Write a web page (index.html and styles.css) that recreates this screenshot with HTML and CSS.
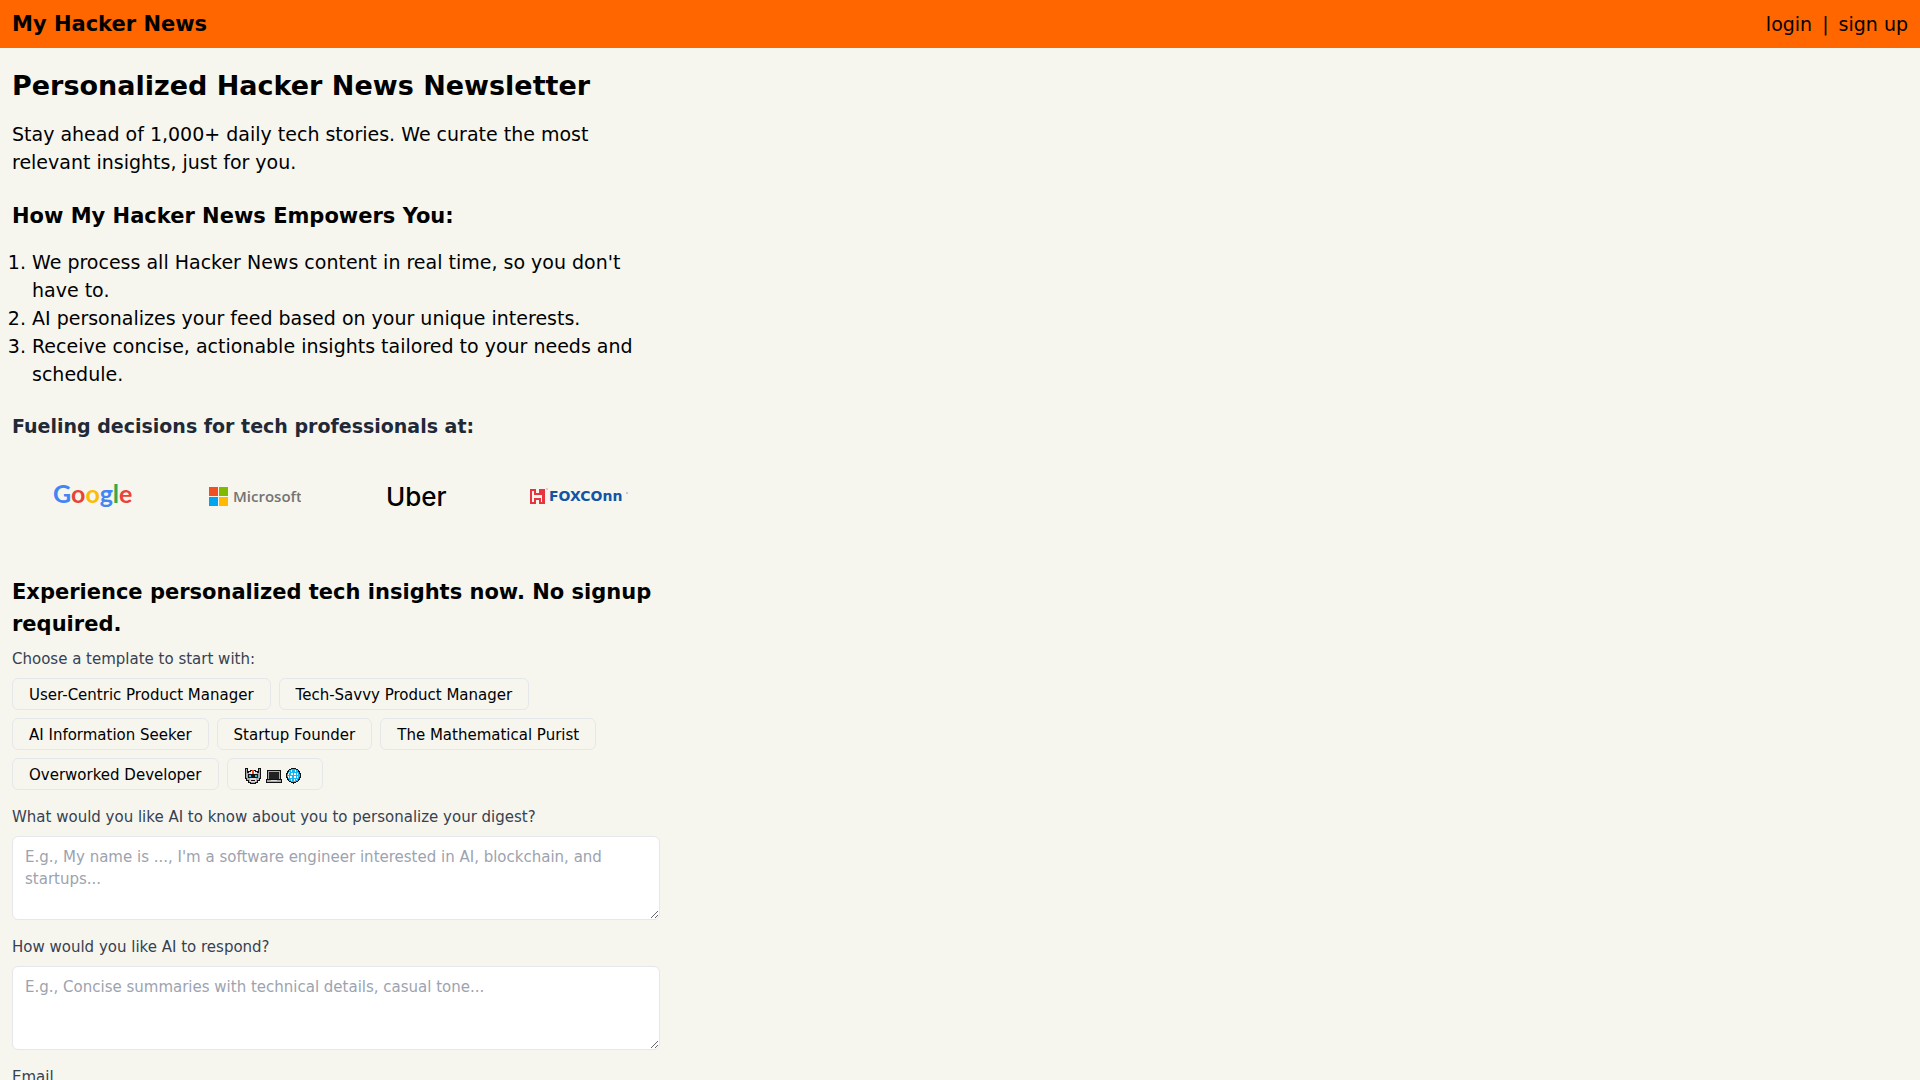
FILE: index.html
```html
<!DOCTYPE html>
<html lang="en">
<head>
  <meta charset="UTF-8" />
  <meta name="viewport" content="width=device-width, initial-scale=1.0"/>
  <title>My Hacker News</title>
  <link rel="stylesheet" href="styles.css">
</head>
<body>

<header class="topbar">
  <a class="brand" href="#">My Hacker News</a>
  <nav class="nav">
    <a href="#">login</a>
    <span>|</span>
    <a href="#">sign up</a>
  </nav>
</header>

<main class="container">
  <h1>Personalized Hacker News Newsletter</h1>
  <p class="lead">Stay ahead of 1,000+ daily tech stories. We curate the most relevant insights, just for you.</p>

  <h2 class="how">How My Hacker News Empowers You:</h2>
  <ol class="steps">
    <li>We process all Hacker News content in real time, so you don't have to.</li>
    <li>AI personalizes your feed based on your unique interests.</li>
    <li>Receive concise, actionable insights tailored to your needs and schedule.</li>
  </ol>

  <h3>Fueling decisions for tech professionals at:</h3>
  <div class="logos">
    <svg width="80" height="40" viewBox="0 0 80 40" role="img" aria-label="Google">
      <text class="google" x="0" y="27"><tspan fill="#4285f4">G</tspan><tspan fill="#ea4335">o</tspan><tspan fill="#fbbc05">o</tspan><tspan fill="#4285f4">g</tspan><tspan fill="#34a853">l</tspan><tspan fill="#ea4335">e</tspan></text>
    </svg>
    <svg width="92" height="32" viewBox="0 0 92 32" role="img" aria-label="Microsoft">
      <rect x="0" y="7" width="9" height="9" fill="#f25022"/>
      <rect x="10" y="7" width="9" height="9" fill="#7fba00"/>
      <rect x="0" y="17" width="9" height="9" fill="#00a4ef"/>
      <rect x="10" y="17" width="9" height="9" fill="#ffb900"/>
      <text class="microsoft" x="24" y="22">Microsoft</text>
    </svg>
    <svg width="62" height="40" viewBox="0 0 62 40" role="img" aria-label="Uber">
      <text class="uber" x="0" y="30">Uber</text>
    </svg>
    <svg width="100" height="32" viewBox="0 0 100 32" role="img" aria-label="Foxconn">
      <path d="M1 9h6v4h3v-4h6v15h-6v-4h-3v4h-6z" fill="#e8343e"/>
      <path d="M3 11h2v4h8v7h-1v-4h-7v4h-2z" fill="#f6f6ef"/>
      <circle cx="18" cy="9" r="1" fill="#f3b5b5"/>
      <text class="foxconn" x="20" y="21">FOXCOnn</text>
      <circle cx="98" cy="13" r="1" fill="#a9bdd8"/>
    </svg>
  </div>

  <h2 class="try">Experience personalized tech insights now. No signup required.</h2>

  <form id="digestForm">
    <p class="hint">Choose a template to start with:</p>
    <div class="templates">
      <button type="button">User-Centric Product Manager</button>
      <button type="button">Tech-Savvy Product Manager</button>
      <button type="button">AI Information Seeker</button>
      <button type="button">Startup Founder</button>
      <button type="button">The Mathematical Purist</button>
      <button type="button">Overworked Developer</button>
      <button type="button" aria-label="Robot, laptop, globe">
        <svg width="62" height="20" viewBox="2 0 62 20" shape-rendering="crispEdges">
          <!-- robot -->
          <path d="M3 3h3v3h2v-1h6v1h2v-3h3v11h-1v2h-2v2h-2v1h-6v-1h-2v-2h-2v-2h-1z" fill="#111"/>
          <path d="M4 4h1v4h2v-1h8v1h2v-4h1v9h-1v2h-2v2h-2v1h-4v-1h-2v-2h-2v-2h-1z" fill="#aaa"/>
          <path d="M7 7h2v2h-2zM13 7h2v2h-2zM8 13h6v4h-6z" fill="#ddd"/>
          <path d="M9 6h4v3h-4z" fill="#fff"/>
          <path d="M10 5h2v4h-2z" fill="#f4442e"/>
          <path d="M6 9h10v4h-10z" fill="#111"/>
          <path d="M7 10h2v2h-2zM13 10h2v2h-2z" fill="#1cc3f5"/>
          <path d="M9 15h4v1h-4z" fill="#111"/>
          <!-- laptop -->
          <path d="M25 5h14v9h1v4h-16v-4h1z" fill="#111"/>
          <path d="M26 6h12v8h-12zM25 15h14v2h-14z" fill="#aaa"/>
          <path d="M27 7h10v7h-10z" fill="#222"/>
          <path d="M29 15h6v1h-6z" fill="#ddd"/>
          <!-- globe -->
          <path d="M49 3h5v1h2v1h1v1h1v2h1v5h-1v2h-1v1h-1v1h-2v1h-2v1h-1v-1h-2v-1h-2v-1h-1v-1h-1v-2h-1v-5h1v-2h1v-1h1v-1h2z" fill="#111"/>
          <path d="M49 4h5v1h2v2h1v2h1v3h-1v2h-1v2h-2v1h-5v-1h-2v-2h-1v-2h-1v-3h1v-2h1v-2h2z" fill="#16b5f0"/>
          <path d="M49 5h1v2h-1zM53 5h1v2h-1zM47 7h1v1h-1zM49 8h2v2h-2zM52 8h2v2h-2zM55 8h1v2h-1zM46 8h1v2h-1zM46 11h1v2h-1zM48 11h2v2h-2zM52 11h2v2h-2zM55 11h1v2h-1zM49 14h1v2h-1zM52 14h1v2h-1zM54 14h1v1h-1z" fill="#fff"/>
        </svg>
      </button>
    </div>

    <label for="about">What would you like AI to know about you to personalize your digest?</label>
    <textarea id="about" placeholder="E.g., My name is ..., I'm a software engineer interested in AI, blockchain, and startups..."></textarea>

    <label for="respond">How would you like AI to respond?</label>
    <textarea id="respond" placeholder="E.g., Concise summaries with technical details, casual tone..."></textarea>

    <label for="email">Email</label>
    <input type="email" id="email" />
  </form>
</main>

</body>
</html>
```
FILE: styles.css
```css
* {
  box-sizing: border-box;
}
body {
  margin: 0;
  background-color: #f6f6ef;
  color: #000;
  font-family: Verdana, "DejaVu Sans", sans-serif;
  font-size: 19px;
  line-height: 28px;
}
a {
  color: inherit;
  text-decoration: none;
}
h1, h2, h3, p, ol {
  margin: 0;
}
.topbar {
  display: flex;
  justify-content: space-between;
  align-items: center;
  height: 48px;
  padding: 0 12px;
  background: #ff6600;
}
.brand {
  font-size: 21px;
  font-weight: bold;
}
.nav {
  display: flex;
  gap: 10px;
}
.container {
  max-width: 672px;
  padding: 20px 12px;
}
h1 {
  margin-bottom: 16px;
  font-size: 27px;
  line-height: 36px;
}
h2 {
  font-size: 21px;
  line-height: 32px;
}
h3 {
  color: #1f2937;
  font-size: 19px;
}
.lead {
  margin-bottom: 24px;
}
.how {
  margin-bottom: 16px;
}
.steps {
  margin-bottom: 24px;
  padding-left: 20px;
}
.logos {
  display: grid;
  grid-template-columns: repeat(4, 1fr);
  align-items: center;
  justify-items: center;
  height: 112px;
  margin-bottom: 24px;
}
.google {
  font: bold 25px Lato, sans-serif;
}
.microsoft {
  font: 600 15px "Open Sans", sans-serif;
  fill: #737373;
}
.uber {
  font: 500 26px Inter, sans-serif;
}
.foxconn {
  font: bold 14px "DejaVu Sans", sans-serif;
  fill: #1454a4;
}
.hint, label {
  display: block;
  color: #374151;
  font-size: 15px;
  line-height: 22px;
}
.hint {
  margin: 8px 0;
}
.templates {
  display: flex;
  flex-wrap: wrap;
  gap: 8px;
  margin-bottom: 16px;
}
button {
  height: 32px;
  padding: 1px 16px 0;
  border: 1px solid #e5e7eb;
  border-radius: 6px;
  background: transparent;
  color: #000;
  font: 15px/22px Verdana, "DejaVu Sans", sans-serif;
  cursor: pointer;
}
button svg {
  display: block;
}
textarea, input {
  display: block;
  width: 100%;
  margin: 8px 0 16px;
  padding: 9px 12px;
  border: 1px solid #e5e7eb;
  border-radius: 6px;
  background: white;
  font: 15px/22px Verdana, "DejaVu Sans", sans-serif;
}
textarea {
  height: 84px;
}
::placeholder {
  color: #9ca3af;
}
```
